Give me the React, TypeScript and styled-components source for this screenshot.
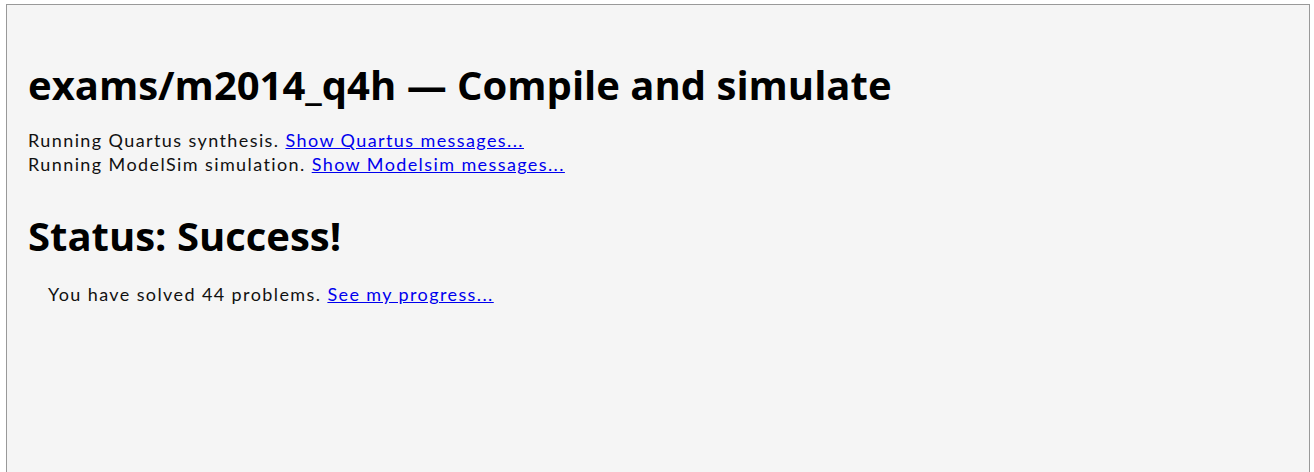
import React from 'react';
import styled, { createGlobalStyle } from 'styled-components';

const GlobalStyle = createGlobalStyle`
  html, body {
    margin: 0;
    background: #fff;
  }
  body {
    padding: 4px 4px 0 6px;
    font-family: Lato, 'Noto Sans', sans-serif;
    font-size: 18px;
    line-height: 24px;
    letter-spacing: 1.4px;
    color: #111;
  }
`;

const Panel = styled.div`
  min-height: 480px;
  border: 1px solid #999;
  border-bottom: none;
  background: #f5f5f5;
  padding: 0 21px;
  box-sizing: border-box;
`;

const Heading = styled.h1<{ $top: number; $bottom: number }>`
  margin: 0;
  padding: ${(p) => p.$top}px 0 ${(p) => p.$bottom}px;
  font-family: 'Open Sans', sans-serif;
  font-size: 40px;
  line-height: 54px;
  font-weight: 700;
  letter-spacing: 0;
  color: #000;
`;

const Log = styled.p`
  margin: 0;
`;

const Link = styled.a`
  color: #0000ee;
  text-decoration: underline;
`;

const Note = styled.div`
  margin-left: 20px;
`;

export default function App() {
  return (
    <>
      <GlobalStyle />
      <Panel>
        <Heading $top={53} $bottom={16}>
          exams/m2014_q4h — Compile and simulate
        </Heading>
        <Log>
          Running Quartus synthesis. <Link href="#">Show Quartus messages...</Link>
          <br />
          Running ModelSim simulation. <Link href="#">Show Modelsim messages...</Link>
        </Log>
        <Heading as="h2" $top={33} $bottom={19}>
          Status: Success!
        </Heading>
        <Note>
          You have solved 44 problems. <Link href="#">See my progress...</Link>
        </Note>
      </Panel>
    </>
  );
}
